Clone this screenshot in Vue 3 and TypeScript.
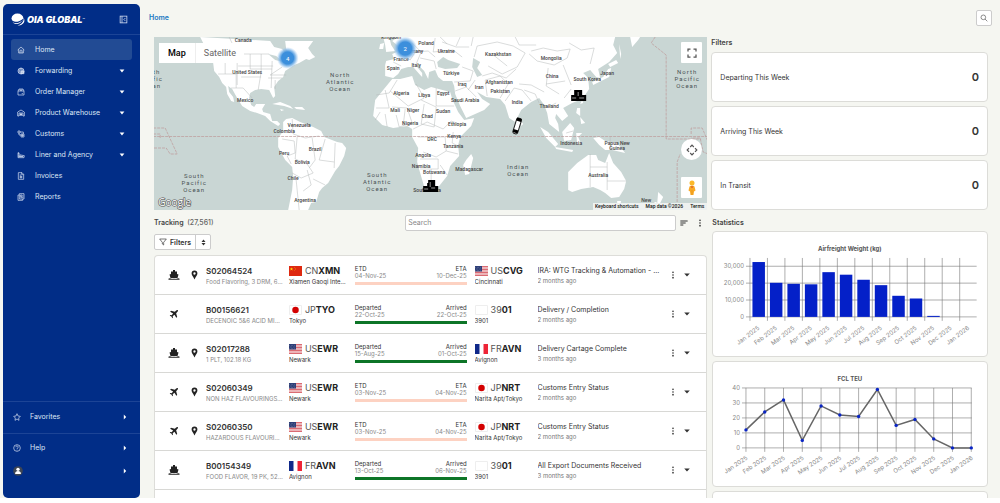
<script setup lang="ts">
interface NavItem { label: string; icon: string; expandable: boolean; active?: boolean }
interface Port { country: string; code: string; place: string; flag: string }
interface Shipment {
  id: string; goods: string; mode: 'ship' | 'plane'; pinned: boolean
  from: Port; to: Port; startLabel: string; start: string; endLabel: string; end: string
  status: string; age: string
}
interface MapLabel { text: string; x: number; y: number }

const navItems: NavItem[] = [
  { label: 'Home', icon: 'home', expandable: false, active: true },
  { label: 'Forwarding', icon: 'globe', expandable: true },
  { label: 'Order Manager', icon: 'box', expandable: true },
  { label: 'Product Warehouse', icon: 'warehouse', expandable: true },
  { label: 'Customs', icon: 'customs', expandable: true },
  { label: 'Liner and Agency', icon: 'liner', expandable: true },
  { label: 'Invoices', icon: 'invoice', expandable: false },
  { label: 'Reports', icon: 'report', expandable: false },
]

const ewr: Port = { country: 'US', code: 'EWR', place: 'Newark', flag: 'us' }
const nrt: Port = { country: 'JP', code: 'NRT', place: 'Narita Apt/Tokyo', flag: 'jp' }
const avn: Port = { country: 'FR', code: 'AVN', place: 'Avignon', flag: 'fr' }
const p3901: Port = { country: '39', code: '01', place: '3901', flag: 'none' }

const shipments: Shipment[] = [
  { id: 'S02064524', goods: 'Food Flavoring, 3 DRM, 600 KG', mode: 'ship', pinned: true,
    from: { country: 'CN', code: 'XMN', place: 'Xiamen Gaoqi International', flag: 'cn' },
    to: { country: 'US', code: 'CVG', place: 'Cincinnati', flag: 'us' },
    startLabel: 'ETD', start: '04-Nov-25', endLabel: 'ETA', end: '10-Dec-25',
    status: 'IRA: WTG Tracking & Automation - Updated', age: '2 months ago' },
  { id: 'B00156621', goods: 'DECENOIC 5&6 ACID MIXTURE', mode: 'plane', pinned: false,
    from: { country: 'JP', code: 'TYO', place: 'Tokyo', flag: 'jp' }, to: p3901,
    startLabel: 'Departed', start: '22-Oct-25', endLabel: 'Arrived', end: '22-Oct-25',
    status: 'Delivery / Completion', age: '2 months ago' },
  { id: 'S02017288', goods: '1 PLT, 102.18 KG', mode: 'ship', pinned: true, from: ewr, to: avn,
    startLabel: 'Departed', start: '15-Aug-25', endLabel: 'Arrived', end: '01-Oct-25',
    status: 'Delivery Cartage Complete', age: '3 months ago' },
  { id: 'S02060349', goods: 'NON HAZ FLAVOURINGS, 2 PK', mode: 'plane', pinned: true, from: ewr, to: nrt,
    startLabel: 'ETD', start: '03-Nov-25', endLabel: 'ETA', end: '04-Nov-25',
    status: 'Customs Entry Status', age: '2 months ago' },
  { id: 'S02060350', goods: 'HAZARDOUS FLAVOURINGS', mode: 'plane', pinned: true, from: ewr, to: nrt,
    startLabel: 'ETD', start: '03-Nov-25', endLabel: 'ETA', end: '04-Nov-25',
    status: 'Customs Entry Status', age: '2 months ago' },
  { id: 'B00154349', goods: 'FOOD FLAVOR, 19 PK, 520 KG', mode: 'ship', pinned: false, from: avn, to: p3901,
    startLabel: 'Departed', start: '13-Oct-25', endLabel: 'Arrived', end: '06-Nov-25',
    status: 'All Export Documents Received', age: '3 months ago' },
]

const counters = ['Departing This Week', 'Arriving This Week', 'In Transit']
const months = ['Jan 2025', 'Feb 2025', 'Mar 2025', 'Apr 2025', 'May 2025', 'Jun 2025', 'Jul 2025',
  'Aug 2025', 'Sep 2025', 'Oct 2025', 'Nov 2025', 'Dec 2025', 'Jan 2026']

const weights = [32500, 20200, 19600, 19300, 26500, 25000, 22000, 18800, 12500, 10900, 600, 0, 0]
const weightTicks = [30000, 20000, 10000, 0]
const weightX = (i: number): number => 37 + i * 17.5
const weightY = (v: number): number => 85 - v * 0.00169

const teu = [12, 24, 32, 5, 28, 22, 21, 39, 15, 19, 6, 0, 0]
const teuTicks = [40, 30, 20, 10, 0]
const teuX = (i: number): number => 33 + i * 18.8
const teuY = (v: number): number => 86 - v * 1.5
const teuLine = teu.map((v, i) => `${teuX(i)},${teuY(v)}`).join(' ')

const countries: MapLabel[] = [
  { text: 'Canada', x: 243, y: 42 }, { text: 'United States', x: 247, y: 74 }, { text: 'Mexico', x: 245, y: 102 },
  { text: 'Venezuela', x: 299, y: 127 }, { text: 'Colombia', x: 284, y: 133 }, { text: 'Brazil', x: 315, y: 151 },
  { text: 'Peru', x: 284, y: 155 }, { text: 'Bolivia', x: 302, y: 164 }, { text: 'Chile', x: 293, y: 180 },
  { text: 'Argentina', x: 305, y: 202 }, { text: 'Kingdom', x: 391, y: 39 }, { text: 'Poland', x: 426, y: 45 },
  { text: 'Germany', x: 413, y: 53 }, { text: 'France', x: 401, y: 61 }, { text: 'Spain', x: 393, y: 70 },
  { text: 'Italy', x: 416, y: 67 }, { text: 'Ukraine', x: 446, y: 53 }, { text: 'Türkiye', x: 451, y: 75 },
  { text: 'Kazakhstan', x: 498, y: 56 }, { text: 'Iraq', x: 462, y: 86 }, { text: 'Iran', x: 479, y: 89 },
  { text: 'Afghanistan', x: 499, y: 84 }, { text: 'Pakistan', x: 500, y: 93 }, { text: 'India', x: 517, y: 104 },
  { text: 'Algeria', x: 401, y: 95 }, { text: 'Libya', x: 424, y: 97 }, { text: 'Egypt', x: 443, y: 95 },
  { text: 'Saudi Arabia', x: 465, y: 102 }, { text: 'Mali', x: 395, y: 112 }, { text: 'Niger', x: 413, y: 112 },
  { text: 'Chad', x: 427, y: 118 }, { text: 'Sudan', x: 443, y: 113 }, { text: 'Nigeria', x: 410, y: 125 },
  { text: 'Ethiopia', x: 457, y: 126 }, { text: 'DRC', x: 432, y: 141 }, { text: 'Kenya', x: 454, y: 138 },
  { text: 'Tanzania', x: 453, y: 148 }, { text: 'Angola', x: 423, y: 157 }, { text: 'Namibia', x: 421, y: 168 },
  { text: 'Botswana', x: 434, y: 174 }, { text: 'Madagascar', x: 469, y: 171 }, { text: 'South Africa', x: 427, y: 192 },
  { text: 'Mongolia', x: 551, y: 60 }, { text: 'China', x: 552, y: 78 }, { text: 'Japan', x: 607, y: 75 },
  { text: 'South Korea', x: 587, y: 81 }, { text: 'Thailand', x: 549, y: 108 }, { text: 'Indonesia', x: 571, y: 145 },
  { text: 'Papua New', x: 617, y: 145 }, { text: 'Guinea', x: 617, y: 150 }, { text: 'Australia', x: 598, y: 177 },
  { text: 'New', x: 646, y: 202 },
]

const oceans: MapLabel[] = [
  { text: 'North', x: 340, y: 77 }, { text: 'Atlantic', x: 340, y: 84 }, { text: 'Ocean', x: 340, y: 91 },
  { text: 'South', x: 377, y: 177 }, { text: 'Atlantic', x: 377, y: 184 }, { text: 'Ocean', x: 377, y: 191 },
  { text: 'South', x: 194, y: 178 }, { text: 'Pacific', x: 194, y: 185 }, { text: 'Ocean', x: 194, y: 192 },
  { text: 'North', x: 687, y: 74 }, { text: 'Pacific', x: 687, y: 81 }, { text: 'Ocean', x: 687, y: 88 },
  { text: 'North', x: 150, y: 74 }, { text: 'Pacific', x: 150, y: 81 }, { text: 'Ocean', x: 150, y: 88 },
  { text: 'Indian', x: 518, y: 169 }, { text: 'Ocean', x: 518, y: 176 },
]
</script>

<template>
  <div class="app">
    <aside class="sidebar">
      <div class="brand">
        <svg class="globe-logo" viewBox="0 0 26 24" aria-hidden="true">
          <ellipse cx="12" cy="9.500" rx="11" ry="8.500" fill="#fff" />
          <path d="M3 15c6 3 13 1 20-5-1 5-6 9-12 9.500-4 0-7-2-8-4.500Z" fill="#012d87" />
          <path d="M3 17c6 3 12 2 17-2-2 4-6 5.500-9 5.500-4 0-6-1.500-8-3.500Z" fill="#fff" />
          <path d="M24 10c3 7-2 13-12 13.500C19 21 23 17 24 10Z" fill="#fff" />
        </svg>
        <span class="wordmark">OIA GLOBAL</span><span class="tm">™</span>
        <button class="icon-btn collapse" aria-label="Collapse menu">
          <svg viewBox="0 0 24 24" fill="none" stroke="currentColor" stroke-width="2"><rect x="3" y="3" width="18" height="18" /><path d="M8 3v18M17 8l-4 4 4 4" /></svg>
        </button>
      </div>
      <nav class="menu" aria-label="Main">
        <a v-for="item in navItems" :key="item.label" href="#" class="nav-link" :class="{ active: item.active }">
          <svg class="nav-icon" viewBox="0 0 24 24" fill="none" stroke="currentColor" stroke-width="2" aria-hidden="true">
            <path v-if="item.icon === 'home'" d="M2 12 12 3l10 9M5 10v11h14V10M9 21v-6a3 3 0 0 1 6 0v6" />
            <g v-else-if="item.icon === 'globe'"><circle cx="12" cy="12" r="9" /><path d="M3 9h18M3 15h18M12 3c-5 5-5 13 0 18M12 3c5 5 5 13 0 18" /><path d="M12 12h9v8h-9z" fill="currentColor" fill-opacity=".6" /></g>
            <path v-else-if="item.icon === 'box'" d="M3 9h18v12H3zM3 9l3-6h12l3 6M9 3v4h6V3M14 17h4" />
            <path v-else-if="item.icon === 'warehouse'" d="M2 21V9l10-6 10 6v12h-4V12H6v9zM9 21v-5h6v5M9 16h6M12 12v9" />
            <g v-else-if="item.icon === 'customs'"><path d="M3 3h6v6H3zM9 6h10v6M6 9v6h6" /><path d="M12 12h9v9h-9zM12 16h9M16 12v9" /></g>
            <path v-else-if="item.icon === 'liner'" d="M3 20h18l1-6-11-2-8-7zM3 13h8M6 16h12M3 17h16M5 4v7" />
            <g v-else-if="item.icon === 'invoice'"><path d="M4 2h11l5 5v15H4zM14 2v6h6" /><path d="M8 9h4M8 13h8M8 17h8M12 11v8" /></g>
            <g v-else><path d="M7 2h14v16H7zM7 6H3v16h14v-4" /><path d="M10 6h5v5h-5zM17 7h2M17 11h2M10 14h9" /></g>
          </svg>
          <span>{{ item.label }}</span>
          <svg v-if="item.expandable" class="caret" viewBox="0 0 10 10" aria-hidden="true"><path d="M1 2.500h8L5 7.500Z" fill="currentColor" /></svg>
        </a>
      </nav>
      <div class="bottom-menu">
        <a href="#" class="bottom-link fav">
          <svg class="nav-icon" viewBox="0 0 24 24" fill="none" stroke="currentColor" stroke-width="2" aria-hidden="true"><path d="m12 2 3 7 7 1-5 5 1 7-6-4-6 4 1-7-5-5 7-1z" /></svg>
          <span>Favorites</span>
          <svg class="caret" viewBox="0 0 10 10" aria-hidden="true"><path d="M3 1v8l4-4Z" fill="currentColor" /></svg>
        </a>
        <a href="#" class="bottom-link help">
          <svg class="nav-icon" viewBox="0 0 24 24" fill="none" stroke="currentColor" stroke-width="2" aria-hidden="true"><circle cx="12" cy="12" r="10" /><path d="M8.500 9.500a3.500 3.500 0 1 1 5 3c-1 .5-1.500 1-1.500 2.500M12 17v2" /></svg>
          <span>Help</span>
          <svg class="caret" viewBox="0 0 10 10" aria-hidden="true"><path d="M3 1v8l4-4Z" fill="currentColor" /></svg>
        </a>
        <a href="#" class="bottom-link user" aria-label="Account">
          <svg class="avatar" viewBox="0 0 24 24" aria-hidden="true"><circle cx="12" cy="12" r="11.500" fill="#3f4653" /><circle cx="12" cy="8" r="4" fill="#fff" /><path d="M5 19c0-5 3-7 7-7s7 2 7 7Z" fill="#fff" /></svg>
          <svg class="caret" viewBox="0 0 10 10" aria-hidden="true"><path d="M3 1v8l4-4Z" fill="currentColor" /></svg>
        </a>
      </div>
    </aside>

    <main class="main">
      <header class="topbar">
        <a href="#" class="crumb">Home</a>
        <button class="search-btn" aria-label="Search">
          <svg viewBox="0 0 24 24" fill="none" stroke="currentColor" stroke-width="2"><circle cx="10" cy="10" r="7" /><path d="m15 15 7 7" /></svg>
        </button>
      </header>

      <div class="content">
        <section class="left">
          <div class="map">
            <svg class="world" viewBox="153 37 555 173" preserveAspectRatio="xMidYMid slice" role="img" aria-label="World map">
              <defs>
                <radialGradient id="cluster"><stop offset="0.55" stop-color="#3c8fdc" /><stop offset="0.75" stop-color="#7fb6e8" stop-opacity=".8" /><stop offset="1" stop-color="#a9cdf0" stop-opacity="0" /></radialGradient>
              </defs>
              <g class="land">
                <path d="M200 37l4 8 6 8 3 10 1 8 5 6 3 6 4 4 1 7 4 7 3 1-1-5-4-5-1-6 4 3 5 9 5 8 8 5 7 2 8 3 5 5 8 5 2-2-3-3-5 0-2-7-7-2-1-3 3-5-9 0-2 3-3-2-2-7 1-5 5-3 6-1 8 1 4 8 2-2-1-9 4-6 5-4 2-6 9-6 5-2 7-4 3 1 6-3-3-3-4-6 5-7h-28l1 8 4 5-3 3-5-8-8-2-4-6Z" />
                <path d="M283 122l3-3 6-1 8 4 13 5 8 4 3 6 13 5 5 1 4 5-2 8-5 10-4 5-7 12-6 5-3 4-3 10-5 1-3 7h-20l4-20 1-13-1-10-7-7-7-13 0-9 5-7Z" />
                <path d="M272 104l8-2 10 4 3 3-9-3zM294 107l8 0 3 3-9-1zM280 109l4 1-3 1z" />
                <path d="M392 79l8 0 12-3 3 9 9 5 7-3 19 5 2 7 6 13 6 8 10-2-3 8-11 11-2 8 1 11-9 10-3 10-8 10-14 4-5-17-3-11 1-14-6-11 0-8-5-3-14 2-11-3-9-9 2-16 8-10Z" />
                <path d="M398 37l-6 4 6 5-1 6-5 2 2 5-8 2-1 4 0 11 8 2 5-4 3-5 7-2 5 0 7 8 2 2 0-4-5-6 2-1 5 5 4 8 1-7 6-2 3 7 5 4 9 0 2 5 1 8 5 12 6 12 18-8 6-6-8-5-5-7 9 5 14 2 5 6 4 13 6 4 6-12 10-8 8-4 5 7 3 8 2 11 10 8-1-8-3-6 1-4 6 7 6-5-5-8 9-5 10-4 7-10-1-11-5-5 7-3 6 7 4 1-2-9 11-7 8-9-4-8 2-8 14-3Z" />
                <path d="M383 37h6l2 8 4 6-9 1-1-7zM380 44l4-1-1 6-4 0zM630 37l2 10 6-7 2-3zM619 44l2 10-1 5zM608 64l8-4 2 3-8 4zM611 68l-2 9-10 5-6 3-1-3 11-5 5-8z" />
                <path d="M463 165l3-5 5-6 2 4-4 16-4 1zM521 121l2 3-2 2zM540 127l8 5 10 12-3 3-9-9zM562 132l8-9 4 5-3 12-7 1zM555 147l18 3-1 2-16-3zM576 133l6 0-4 4 3 7-4 0zM577 108l3 0 0 8-4-3zM580 117l5 6-4 1zM593 138l6-1 6 4 12 2 8 10-13-3-7 0-6-5zM580 104l2-4 1 3z" />
                <path d="M568 172l9-9 11-8 8 0 2 5 7 3 4-10 4 10 8 9 5 9-2 8-5 8-8 1-6-5-5-3-7-3-12 2-9 3-4-2zM617 201l4 0-1 4-3-1zM658 192l5 5-3 6-3 1zM655 202l-8 6 3 1 8-6z" />
              </g>
              <g class="water">
                <path d="M437 62l6-5 5 3 12 4-3 4-12 1-7-2zM473 58l7 4-3 6 5 7-5 2-5-10zM268 54l8 2 7 6-8-2zM283 61l5 2-2 3z" />
              </g>
              <g class="borders">
                <path d="M211 54h58M229 37l8 17M250 54v15h22M218 74h18v14M225 54v20M237 57v28M261 54v18l-3 18M272 61l-1 27M231 88h12l9 10M282 67l-12 8h16M268 78h14M275 80v9M238 66h35M241 77h20" />
                <path d="M292 119l1 15 12 4 14-2M282 139l12 2 1 12-8 3 4 8M297 137l-2 22 12 5 6 9-12 5-9-5M307 170l4 15-8 6M325 139l-6 21 15 2M312 138l3 22-6 8M335 143l-1 25M296 180l3 30M313 179l12 6" />
                <path d="M397 80l-8 13-13 2M390 91l18 15 16-8-8-14M376 108h13l-4-18M392 107l15 1 5 15-13 4-3-12M436 88v18h18M421 100l15 7-2 20-13-3 3-20M413 129l14-7 16 7 8-8 8 3M418 137h15l12 0 1 14-10 6-13-5M453 132l-1 11 8 4M420 159h18v10h-18M431 169v17M440 165l7 10M446 151l12 3M405 109l-2 17M385 114l2 13M380 112l-5 8" />
                <path d="M400 52l10 8 5-8 13-1 7 6M412 43l9 9-5 12M435 38l-2 14 20-2 9 7M442 42l14 5 13 0M393 62l8 4M420 58l14 3 2 8M462 67l11 4-3 10-16 1M475 80l-7 10M455 91l11-4 10 10M487 96l-2-16 15-4 8 8-8 14M482 76l10-3 14 5 10-9M474 57l3-11 20-4 16 4 12 7-8 14-15 7-14-8M505 101l9-13 8 2 9 11M524 90l11 4 4 9M531 51l12-3 14 3 13-2-3 9-13 7-17-4-8-7M569 43l12 7 13-2-4 16M519 84l12 1 13 7M548 68l-2 18 13 8M563 65l8 20M540 103l8 4 8-4M546 84l19-3M564 98l7-9M492 54l15 12M515 37l4 8 17 0M440 37l7 7M460 37l-4 9M473 37l-2 9" />
                <path d="M590 154v33M607 162v28M590 167h17M607 181h19M610 137v13M566 133l7-2" />
              </g>
              <g class="dateline">
                <path d="M153 136.500H708M153 128h12l12 26h-7l-4-6h-13M153 134h7v4M655 37l-4 6 15 12v84h35M677 210v-48l3-8M691 134v-6h11l6 14M708 154l-5-2-3-14h-9" />
              </g>
              <text v-for="(l, i) in countries" :key="'c' + i" :x="l.x" :y="l.y" class="country">{{ l.text }}</text>
              <text v-for="(l, i) in oceans" :key="'o' + i" :x="l.x" :y="l.y" class="ocean">{{ l.text }}</text>
              <circle cx="287.500" cy="58" r="11" fill="url(#cluster)" />
              <circle cx="405" cy="48.500" r="12" fill="url(#cluster)" />
              <text x="287.500" y="61" class="cluster-count">4</text>
              <text x="405" y="51" class="cluster-count">2</text>
              <path class="marker" d="M423 186h4v-3h1v-3h7v6h3v6h-15z" />
              <path class="marker" d="M571 95h3v-5h8v5h4v6h-15z" />
              <path class="marker-lines" d="M424 189h4M431 188h4M430 182v5M572 98h4M579 98h5M578 92v4" />
              <g transform="rotate(17 517 126)"><rect x="514.500" y="118" width="5" height="16" rx="2" fill="#fff" stroke="#222" stroke-width="1" /><path d="M514.500 118h5v3h-5zM514.500 130h5v3h-5z" fill="#000" /></g>
              <text x="158" y="206" class="google">Google</text>
            </svg>
            <div class="map-type">
              <button class="map-on">Map</button>
              <button>Satellite</button>
            </div>
            <button class="map-ctl full" aria-label="Toggle fullscreen">
              <svg viewBox="0 0 20 20" fill="none" stroke="currentColor" stroke-width="2.500"><path d="M2 7V2h5M13 2h5v5M18 13v5h-5M7 18H2v-5" /></svg>
            </button>
            <button class="map-ctl round" aria-label="Map camera controls">
              <svg viewBox="0 0 20 20" fill="none" stroke="currentColor" stroke-width="2"><path d="m7 5 3-3 3 3M7 15l3 3 3-3M5 7l-3 3 3 3M15 7l3 3-3 3" /></svg>
            </button>
            <button class="map-ctl pegman" aria-label="Street View">
              <svg viewBox="0 0 20 32"><path d="M5 13q5-4 10 0l2 8-3 2-1 7H7l-1-7-3-2Z" fill="#f9a825" /><circle cx="10" cy="6" r="5" fill="#fbb829" /><path d="m7 13 3 3 3-3Z" fill="#d2452c" /><path d="M10 20v10" stroke="#d98c12" /></svg>
            </button>
            <div class="map-legal"><button>Keyboard shortcuts</button><span>Map data ©2026</span><a href="#">Terms</a></div>
          </div>

          <div class="tracking-bar">
            <h2>Tracking <span class="total">(27,561)</span></h2>
            <input class="search" type="text" placeholder="Search" aria-label="Search shipments" />
            <button class="icon-btn sort" aria-label="Sort">
              <svg viewBox="0 0 24 24" fill="none" stroke="currentColor" stroke-width="3"><path d="M1 6h22M1 12h16M1 18h9" /></svg>
            </button>
            <button class="icon-btn" aria-label="More options">
              <svg viewBox="0 0 24 24" fill="currentColor"><circle cx="12" cy="4" r="2.500" /><circle cx="12" cy="12" r="2.500" /><circle cx="12" cy="20" r="2.500" /></svg>
            </button>
          </div>

          <div class="filter-group">
            <button class="filter-main">
              <svg viewBox="0 0 24 24" fill="none" stroke="currentColor" stroke-width="2" aria-hidden="true"><path d="M2 3h20l-8 10v8l-4-3v-5Z" /></svg>Filters
            </button>
            <button class="filter-toggle" aria-label="Expand filters">
              <svg viewBox="0 0 10 14" fill="currentColor"><path d="M1 6h8L5 1ZM1 8h8L5 13Z" /></svg>
            </button>
          </div>

          <ul class="shipments">
            <li v-for="s in shipments" :key="s.id" class="row">
              <div class="marks">
                <svg v-if="s.mode === 'ship'" class="mode" viewBox="0 0 24 24" fill="currentColor" role="img" aria-label="Sea"><path d="M10 2h4v3h4v5l3 1-2 7H5l-2-7 3-1V5h4Z" /><path d="M1 19q3-2 5 0 3 1 6 0 3 1 6 0 2-2 5 0v3H1Z" fill-opacity=".75" /></svg>
                <svg v-else class="mode" viewBox="-2 -2 28 28" fill="currentColor" role="img" aria-label="Air"><path d="m21 3c-1-1-3 0-4 1l-3 3L5 4.500 3 6.500l7 4.500-3.500 4-3-.5L2 16l4 2 2 4 1.500-1.500-.5-3 4-3.500L17.500 21l2-2L17 10l3-3c1-1 2-3 1-4Z" /></svg>
                <svg v-if="s.pinned" class="pin" viewBox="0 0 16 24" fill="currentColor" role="img" aria-label="Tracked"><path fill-rule="evenodd" d="M8 1a7 7 0 0 1 7 7c0 5-4 8-7 15C5 16 1 13 1 8a7 7 0 0 1 7-7Zm0 4.500a2.800 2.800 0 1 0 0 5.600 2.800 2.800 0 0 0 0-5.600Z" /></svg>
              </div>
              <div class="cell">
                <a href="#" class="id">{{ s.id }}</a>
                <span class="goods">{{ s.goods }}</span>
              </div>
              <template v-for="side in (['from', 'to'] as const)" :key="side">
                <div class="cell port" :class="side">
                  <span class="code">
                    <svg class="flag" viewBox="0 0 26 20" aria-hidden="true">
                      <template v-if="s[side].flag === 'us'">
                        <path fill="#fff" d="M0 0h26v20H0z" />
                        <path stroke="#d0454f" stroke-width="1.600" d="M0 1h26M0 4h26M0 7h26M0 10h26M0 13h26M0 16h26M0 19h26" />
                        <path fill="#2e3f78" d="M0 0h14v11H0z" />
                        <path stroke="#fff" stroke-opacity=".5" stroke-dasharray="1 2" d="M1 3h12M2 6h11M1 9h12" />
                      </template>
                      <template v-else-if="s[side].flag === 'cn'">
                        <path fill="#de2910" d="M0 0h26v20H0z" />
                        <path fill="#ffde00" d="m5 3 1 2h2L6.500 6.500 7 9 5 7.500 3 9l.5-2.500L2 5h2zM10 2h1v1h-1zM12 4h1v1h-1zM12 7h1v1h-1zM10 9h1v1h-1z" />
                      </template>
                      <template v-else-if="s[side].flag === 'fr'">
                        <path fill="#fff" d="M0 0h26v20H0z" /><path fill="#10298a" d="M0 0h9v20H0z" /><path fill="#ee2436" d="M17 0h9v20h-9z" />
                      </template>
                      <template v-else>
                        <path fill="#fff" stroke="#eee" stroke-width="2" d="M1 1h24v18H1z" />
                        <circle v-if="s[side].flag === 'jp'" cx="13" cy="10" r="6.500" fill="#d30000" />
                      </template>
                    </svg>
                    <span>{{ s[side].country }}<b>{{ s[side].code }}</b></span>
                  </span>
                  <span class="place">{{ s[side].place }}</span>
                </div>
                <div v-if="side === 'from'" class="cell dates">
                  <div class="date-line"><span>{{ s.startLabel }}</span><span>{{ s.endLabel }}</span></div>
                  <div class="date-line dim"><time>{{ s.start }}</time><time>{{ s.end }}</time></div>
                  <div class="progress" :class="{ done: s.endLabel === 'Arrived' }"></div>
                </div>
              </template>
              <div class="cell state">
                <span class="status">{{ s.status }}</span>
                <span class="age">{{ s.age }}</span>
              </div>
              <button class="icon-btn" aria-label="Shipment actions">
                <svg viewBox="0 0 24 24" fill="currentColor"><circle cx="12" cy="4" r="2.500" /><circle cx="12" cy="12" r="2.500" /><circle cx="12" cy="20" r="2.500" /></svg>
              </button>
              <button class="icon-btn expand" aria-label="Show details">
                <svg viewBox="0 0 10 10"><path d="M1.500 3h7L5 7Z" fill="currentColor" /></svg>
              </button>
            </li>
            <li class="row next"></li>
          </ul>
        </section>

        <section class="right">
          <h2 class="filters-title">Filters</h2>
          <div class="counters">
            <button v-for="c in counters" :key="c" class="counter"><span>{{ c }}</span><strong>0</strong></button>
          </div>
          <h2 class="stats-title">Statistics</h2>
          <div class="charts">
            <figure class="chart">
              <svg viewBox="0 0 274 124" role="img" aria-label="Airfreight Weight (kg)">
                <text x="137" y="19" class="chart-title">Airfreight Weight (kg)</text>
                <g class="grid">
                  <path v-for="t in weightTicks" :key="t" :d="`M33 ${weightY(t)}H264`" />
                  <path v-for="(m, i) in months" :key="m" :d="`M${weightX(i)} 26V89`" />
                </g>
                <text v-for="t in weightTicks" :key="'t' + t" x="31" :y="weightY(t) + 2" class="tick">{{ t.toLocaleString('en-US') }}</text>
                <rect v-for="(w, i) in weights" :key="'b' + i" :x="weightX(i) + 2.500" :y="weightY(w)" width="12.500" :height="85 - weightY(w)" fill="#0420c8" />
                <text v-for="(m, i) in months" :key="'m' + m" class="tick" :transform="`translate(${weightX(i) + 10} 97) rotate(-37)`">{{ m }}</text>
              </svg>
            </figure>
            <figure class="chart">
              <svg viewBox="0 0 274 124" role="img" aria-label="FCL TEU">
                <text x="137" y="19" class="chart-title">FCL TEU</text>
                <g class="grid">
                  <path v-for="t in teuTicks" :key="t" :d="`M29 ${teuY(t)}H259`" />
                  <path v-for="(m, i) in months" :key="m" :d="`M${teuX(i)} 26V90`" />
                </g>
                <text v-for="t in teuTicks" :key="'t' + t" x="27" :y="teuY(t) + 2" class="tick">{{ t }}</text>
                <polyline :points="teuLine" fill="none" stroke="#666" stroke-width="1.500" />
                <circle v-for="(v, i) in teu" :key="'p' + i" :cx="teuX(i)" :cy="teuY(v)" r="1.700" fill="#0a25c4" />
                <text v-for="(m, i) in months" :key="'m' + m" class="tick" :transform="`translate(${teuX(i) + 2} 97) rotate(-34)`">{{ m }}</text>
              </svg>
            </figure>
            <figure class="chart"></figure>
          </div>
        </section>
      </div>
    </main>
    <div class="page-end"></div>
  </div>
</template>

<style>
body { margin: 0; }
</style>

<style scoped>
* { box-sizing: border-box; }
.app {
  height: 100vh; overflow: hidden; display: grid;
  grid-template-columns: 141px minmax(0, 1fr); grid-template-rows: minmax(0, 1fr) 5px;
  background: #f5f6f1; color: #333; font: 7px/9px Inter, "Liberation Sans", sans-serif;
}
.page-end { grid-column: 1 / -1; background: #fff; }
button { font: inherit; color: inherit; background: none; border: 0; padding: 0; margin: 0; cursor: pointer; }
a { color: inherit; text-decoration: none; }
svg { display: block; }
h2 { margin: 0; font-size: 7px; line-height: 9px; font-weight: 600; color: #444; }
.icon-btn { display: flex; align-items: center; justify-content: center; color: #333; }
.icon-btn svg { width: 8px; height: 8px; }

.sidebar { margin: 4px 1px 0 3px; border-radius: 5px; background: #012d87; color: #dfe7f6; display: flex; flex-direction: column; min-height: 0; }
.brand { display: flex; align-items: center; height: 31px; padding: 0 12px 0 8px; border-bottom: 1px solid #1c4496; }
.globe-logo { width: 14px; height: 13px; margin-right: 2px; }
.wordmark { font-size: 9px; font-weight: 900; font-style: italic; color: #fff; white-space: nowrap; }
.tm { font-size: 4px; line-height: 9px; align-self: center; color: #fff; }
.collapse { margin-left: auto; color: #dfe7f6; }
.collapse svg { width: 9px; height: 9px; }
.menu { display: flex; flex-direction: column; padding: 4px 8px; }
.nav-link { display: flex; align-items: center; height: 21px; padding: 0 7px 0 6px; border-radius: 3px; }
.nav-link.active { background: #224b94; }
.nav-icon { width: 8px; height: 8px; margin-right: 10px; }
.caret { width: 6px; height: 6px; margin-left: auto; color: #fff; }
.bottom-menu { margin-top: auto; }
.bottom-link { display: flex; align-items: center; padding: 0 12px 0 10px; height: 23px; }
.fav, .help { border-top: 1px solid #1c4496; }
.bottom-link .nav-icon { margin-right: 9px; }
.fav { height: 32px; padding-bottom: 2px; }
.help { height: 28px; }
.user { height: 37px; padding-bottom: 17px; }
.avatar { width: 10px; height: 10px; }

.main { min-width: 0; min-height: 0; overflow: hidden; padding: 0 12px 0 13px; }
.topbar { display: flex; align-items: center; justify-content: space-between; height: 37px; margin: 0 -4px 0 -5px; padding-bottom: 2px; }
.crumb { color: #1a78c2; font-weight: 600; }
.search-btn { width: 16px; height: 16px; display: flex; align-items: center; justify-content: center; background: #fff; border: 1px solid #ccc; border-radius: 2px; color: #555; }
.search-btn svg { width: 8px; height: 8px; }
.content { display: grid; grid-template-columns: minmax(0, 2fr) minmax(0, 1fr); gap: 4px; }
.left, .right { min-width: 0; }

.map { position: relative; height: 173px; overflow: hidden; background: #c9d6d4; font-family: Roboto, sans-serif; }
.world { width: 100%; height: 100%; }
.land { fill: #fff; }
.water { fill: #c9d6d4; }
.borders { fill: none; stroke: #b5b8b8; stroke-width: 0.5; }
.dateline { fill: none; stroke: #bd9a9a; stroke-width: 0.7; stroke-dasharray: 3 1; }
.country { font-size: 5px; font-weight: 500; text-anchor: middle; fill: #444; }
.ocean { font-size: 6px; letter-spacing: 1px; text-anchor: middle; fill: #4a5254; }
.cluster-count { font-size: 6px; text-anchor: middle; fill: #fff; }
.marker { fill: #000; }
.marker-lines { stroke: #fff; stroke-width: 0.6; }
.google { font: 500 10px "Open Sans", sans-serif; fill: #fff; stroke: #555; stroke-width: 1.2; paint-order: stroke; }
.map-type { position: absolute; left: 5px; top: 6px; height: 20px; display: flex; background: #fff; font-size: 9px; color: #666; }
.map-type button { padding: 0 8px; }
.map-type .map-on { color: #000; font-weight: 500; padding: 0 9px; border-right: 1px solid #eee; }
.map-ctl { position: absolute; right: 5px; width: 21px; height: 21px; display: flex; align-items: center; justify-content: center; background: #fff; color: #555; border-radius: 1px; }
.map-ctl svg { width: 10px; height: 10px; }
.full { top: 5px; }
.round { top: 102px; border-radius: 50%; }
.round svg { width: 12px; height: 12px; }
.pegman { top: 140px; }
.pegman svg { height: 16px; }
.map-legal { position: absolute; right: 0; bottom: 0; display: flex; gap: 7px; padding: 0 3px 0 2px; background: #eef1f0; font-size: 5px; line-height: 7px; font-weight: 500; color: #111; }

.tracking-bar { display: grid; grid-template-columns: minmax(0, 251fr) minmax(0, 271fr) 16px 15px; align-items: center; height: 17px; margin-top: 4px; }
.total { font-weight: 500; color: #666; margin-left: 2px; }
.search { width: 100%; height: 16px; padding: 0 2px; border: 1px solid #ccc; border-radius: 2px; background: #fff; font: inherit; color: #333; outline: none; }
.search::placeholder { color: #888; }
.filter-group { display: inline-flex; height: 16px; margin-top: 3px; border: 1px solid #ccc; border-radius: 2px; background: #fff; vertical-align: top; }
.filter-main { display: flex; align-items: center; gap: 3px; padding: 0 4px; font-weight: 600; border-right: 1px solid #ccc; }
.filter-main svg { width: 8px; height: 8px; }
.filter-toggle { width: 14px; display: flex; align-items: center; justify-content: center; }
.filter-toggle svg { width: 5px; height: 7px; }

.shipments { list-style: none; margin: 5px 0 0; padding: 0; border: 1px solid #ddddd9; border-bottom: 0; border-radius: 4px 4px 0 0; background: #fff; }
.row {
  display: grid; align-items: center; height: 39px; padding: 0 11px 0 12px; border-bottom: 1px solid #d8d8d5;
  grid-template-columns: 39px minmax(0, 83fr) minmax(0, 66fr) minmax(0, 120fr) minmax(0, 63fr) minmax(0, 130fr) 12px 16px;
}
.marks { display: flex; align-items: center; gap: 11px; padding-left: 1px; color: #222; }
.mode { width: 12px; height: 12px; }
.pin { width: 7px; height: 10px; }
.cell { display: flex; flex-direction: column; min-width: 0; padding-right: 6px; }
.cell > span, .cell > a { overflow: hidden; text-overflow: ellipsis; white-space: nowrap; }
.id { font-size: 8px; line-height: 12px; font-weight: 600; }
.goods { font-size: 6px; line-height: 9px; color: #888; }
.port .code { display: flex; align-items: center; gap: 3px; font-size: 9px; line-height: 12px; color: #555; }
.port b { font-weight: 700; color: #222; }
.port.from { padding-right: 8px; }
.port.to { padding-right: 0; }
.flag { width: 13px; height: 10px; flex: none; }
.place { font-size: 6px; line-height: 9px; color: #333; }
.dates { padding-right: 8px; }
.date-line { display: flex; justify-content: space-between; font-size: 6px; line-height: 7px; color: #333; }
.dim { color: #888; }
.progress { height: 3px; margin-top: 3px; background: #fdd2c2; }
.progress.done { background: #0d7527; }
.status { font-size: 7px; line-height: 10px; }
.age { font-size: 6px; line-height: 9px; color: #777; }
.expand svg { width: 8px; height: 8px; }

.filters-title { padding-top: 1px; }
.counters { display: flex; flex-direction: column; gap: 4px; margin-top: 5px; }
.counter { display: flex; align-items: center; justify-content: space-between; height: 50px; padding: 0 8px; border: 1px solid #dcdcd8; border-radius: 4px; background: #fff; }
.counter strong { font-size: 11px; font-weight: 600; }
.stats-title { margin: 8px 0 4px 1px; }
.charts { display: flex; flex-direction: column; gap: 4px; padding-left: 1px; }
.chart { margin: 0; min-height: 60px; border: 1px solid #dcdcd8; border-radius: 4px; background: #fff; }
.chart svg { width: 100%; }
.chart-title { font-size: 6px; font-weight: 700; text-anchor: middle; fill: #555; }
.tick { font-size: 6px; text-anchor: end; fill: #888; }
.grid { fill: none; stroke: #777; stroke-width: 0.6; }
</style>
